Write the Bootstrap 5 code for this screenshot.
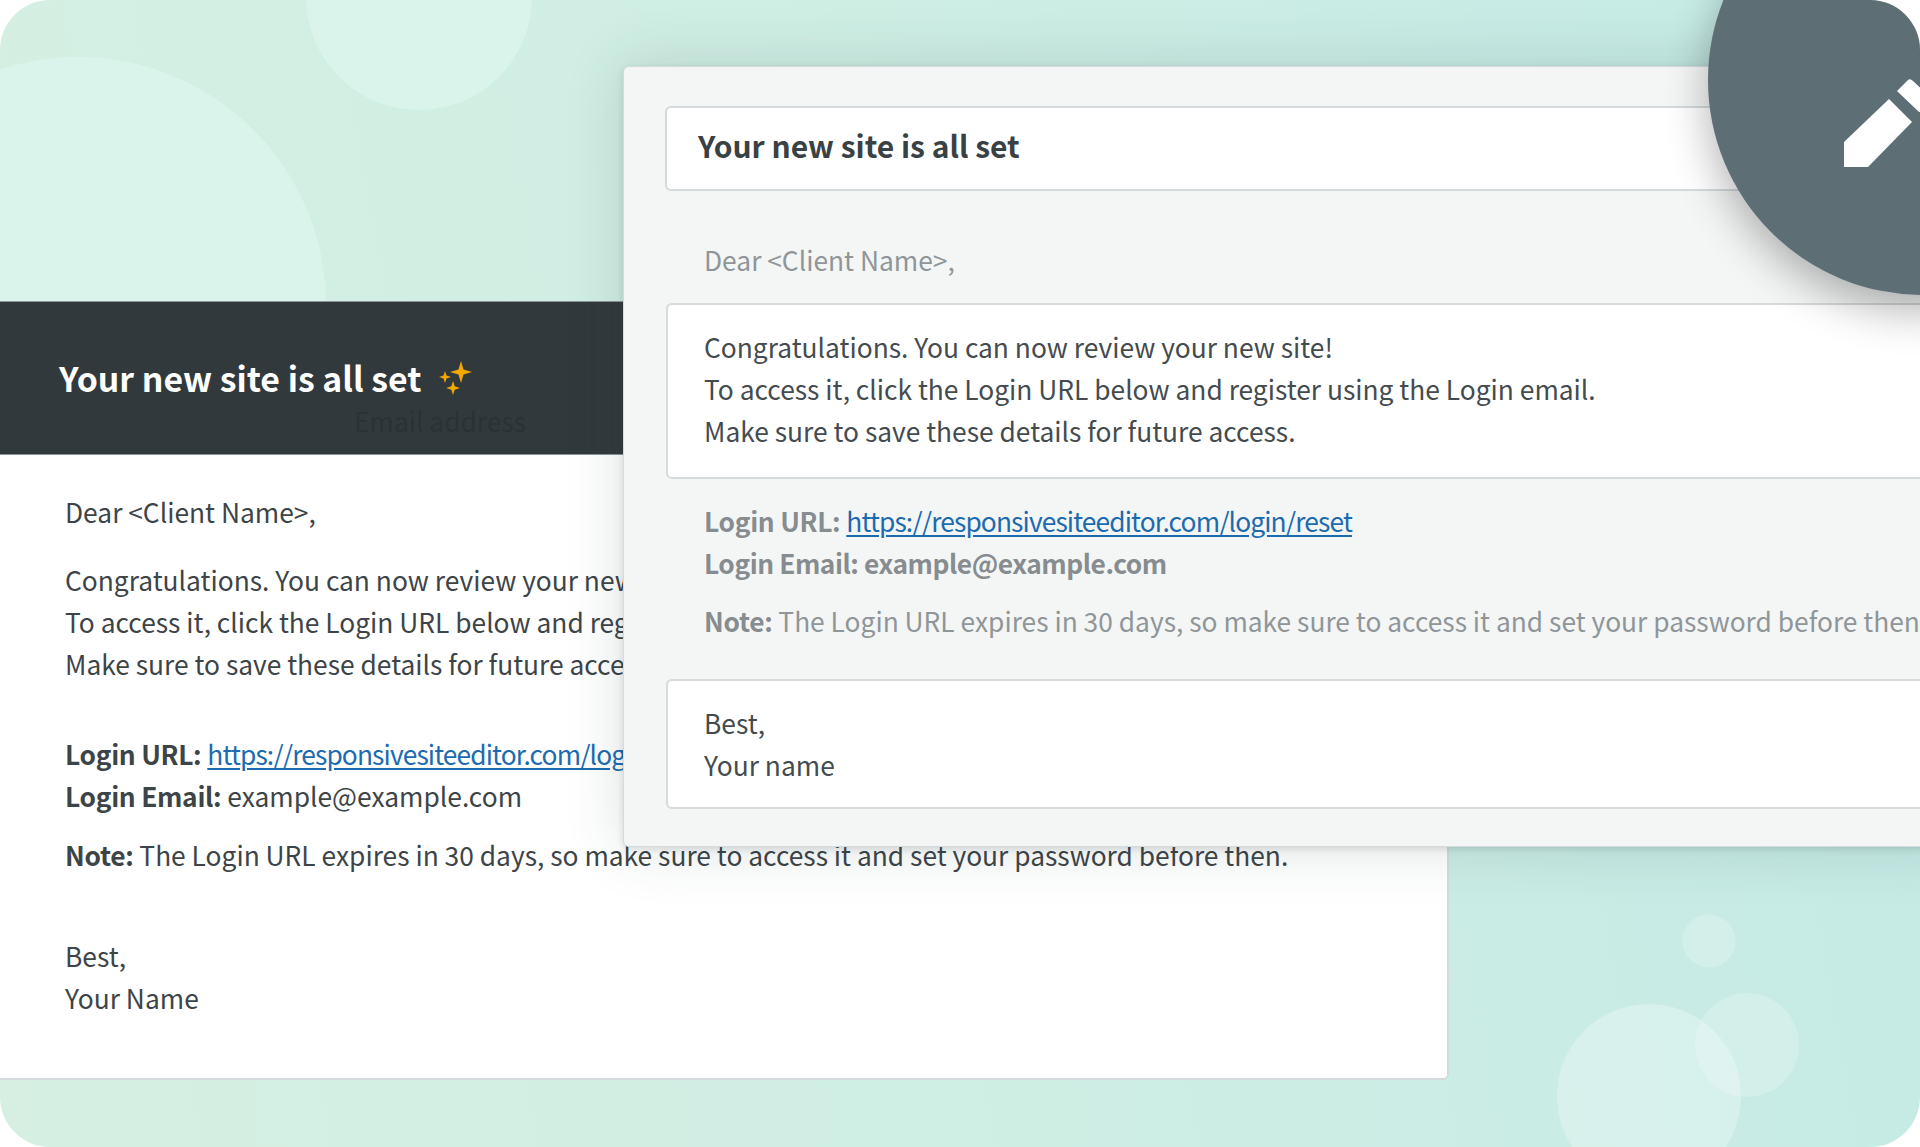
<!DOCTYPE html>
<html lang="en">
<head>
  <meta charset="UTF-8">
  <title>Your new site is all set</title>
  <link href="https://cdn.jsdelivr.net/npm/bootstrap@5.3.0/dist/css/bootstrap.min.css" rel="stylesheet">
  <style>
    body { margin: 0; background: #fff; font-family: "Noto Sans CJK JP", "Noto Sans", sans-serif; font-size: 26.35px; line-height: 42px; color: #3d4448; }
    b { letter-spacing: -.3px; }
    .stage { position: relative; width: 1920px; height: 1147px; overflow: hidden; border-radius: 50px; background: linear-gradient(80deg, #d6efe2 0%, #ceeee4 50%, #c4eae5 100%); }
    .blobs { position: absolute; inset: 0; }
    .email-card { position: relative; width: 1449px; margin-top: 301px; background: #fff; border: 0; border-right: 2px solid #d5dadd; border-bottom: 2px solid #d5dadd; border-radius: 0 0 6px 0; }
    .email-head { height: 154px; padding-left: 59px; background: #32393c; border-top: 1px solid #8d9598; border-bottom: 1px solid #8d9598; position: relative; }
    .email-head h1 { margin: 0; font-size: 33.8px; font-weight: 700; color: #fff; line-height: 148px; }
    .ghost-label { position: absolute; left: 354px; top: 98px; font-size: 26.35px; line-height: 42px; color: #2b3134; }
    .email-body { padding: 36px 65px 59px; }
    .email-body p { margin: 0; }
    .email-body .gap-a { margin-top: 26px; }
    .email-body .gap-b { margin-top: 48px; }
    .email-body .gap-c { margin-top: 17px; }
    .email-body .gap-d { margin-top: 59px; }
    .edit-panel { position: absolute; left: 623px; top: 66px; width: 1340px; height: 781px; padding: 39px 0 0 41px; background: #f4f6f5; border: 1px solid #d5dadd; border-radius: 6px 0 0 6px; white-space: nowrap; box-shadow: 0 0 60px rgba(40, 60, 60, .16), 0 2px 6px rgba(40, 60, 60, .14); }
    .subject-box { height: 85px; padding-left: 31px; background: #fff; border: 2px solid #d5dadd; border-radius: 6px; font-size: 30px; font-weight: 700; line-height: 75px; color: #3a4144; }
    .text-box { margin-left: 1px; background: #fff; border: 2px solid #d5dadd; border-radius: 6px; padding: 21px 36px 25px; color: #444b4f; }
    .edit-panel .muted-line { margin: 0 0 0 39px; color: #8f9598; }
    .muted-line b { color: #868c8f; font-weight: 700; }
    .muted-line .tight-bold { letter-spacing: -.46px; }
    .edit-panel .dear-line { margin-top: 48px; }
    .edit-panel .body-box { margin-top: 22px; }
    .edit-panel .login-lines { margin-top: 21px; }
    .edit-panel .note-line { margin-top: 16px; }
    .edit-panel .sign-box { margin-top: 37px; padding-bottom: 21px; }
    a { color: #1c6bb0; letter-spacing: -.88px; text-underline-offset: 3px; }
    .edit-badge { position: absolute; left: 1708px; top: -135px; width: 430px; height: 430px; border-radius: 50%; background: #5e6e75; box-shadow: 0 16px 44px rgba(0, 0, 0, .3); }
    .edit-icon { position: absolute; left: 1830px; top: 60px; }
  </style>
</head>
<body>
  <div class="stage">
    <svg class="blobs" width="1920" height="1147" fill="#dcf5ec" fill-opacity=".85">
      <circle cx="78" cy="305" r="248"></circle>
      <circle cx="419" cy="-3" r="113"></circle>
      <circle cx="1709" cy="941" r="26.5" fill="#fff" fill-opacity=".2"></circle>
      <circle cx="1747" cy="1045" r="52" fill="#fff" fill-opacity=".2"></circle>
      <circle cx="1649" cy="1096" r="92" fill="#fff" fill-opacity=".28"></circle>
    </svg>

    <div class="card email-card">
      <div class="email-head d-flex align-items-center gap-3">
        <h1>Your new site is all set</h1>
        <svg width="36" height="36" viewBox="0 0 36 36" fill="#f5a800">
          <path d="M24 1l2.5 8.5L35 12l-8.5 2.5L24 23l-2.5-8.500L13 12l8.500-2.500z"></path>
          <path d="M8 11l1.500 4.500L14 17l-4.500 1.500L8 23l-1.500-4.500L2 17l4.500-1.500z"></path>
          <path d="M16 21l1.700 5.300L23 28l-5.300 1.700L16 35l-1.700-5.300L9 28l5.300-1.700z"></path>
        </svg>
        <span class="ghost-label">Email address</span>
      </div>
      <div class="email-body">
        <p>Dear &lt;Client Name&gt;,</p>
        <p class="gap-a">Congratulations. You can now review your new site!<br>To access it, click the Login URL below and register using the Login email.<br>Make sure to save these details for future access.</p>
        <p class="gap-b"><b>Login URL:</b> <a href="#">https://responsivesiteeditor.com/login/reset</a><br><b>Login Email:</b> example@example.com</p>
        <p class="gap-c"><b>Note:</b> The Login URL expires in 30 days, so make sure to access it and set your password before then.</p>
        <p class="gap-d">Best,<br>Your Name</p>
      </div>
    </div>

    <div class="edit-panel">
      <div class="subject-box">Your new site is all set</div>
      <p class="muted-line dear-line">Dear &lt;Client Name&gt;,</p>
      <div class="text-box body-box">Congratulations. You can now review your new site!<br>To access it, click the Login URL below and register using the Login email.<br>Make sure to save these details for future access.</div>
      <p class="muted-line login-lines"><b>Login URL:</b> <a href="#">https://responsivesiteeditor.com/login/reset</a><br><b class="tight-bold">Login Email: example@example.com</b></p>
      <p class="muted-line note-line"><b>Note:</b> The Login URL expires in 30 days, so make sure to access it and set your password before then.</p>
      <div class="text-box sign-box">Best,<br>Your name</div>
    </div>

    <div class="edit-badge"></div>
    <svg class="edit-icon" width="120" height="120" viewBox="0 0 120 120" fill="#fff">
      <path d="M14 82L59 39L82 62L38 107H14z"></path>
      <path d="M67 31L78 20Q80 18 83 21L106 42Q109 46 106 50L89 52z"></path>
    </svg>
  </div>
</body>
</html>
